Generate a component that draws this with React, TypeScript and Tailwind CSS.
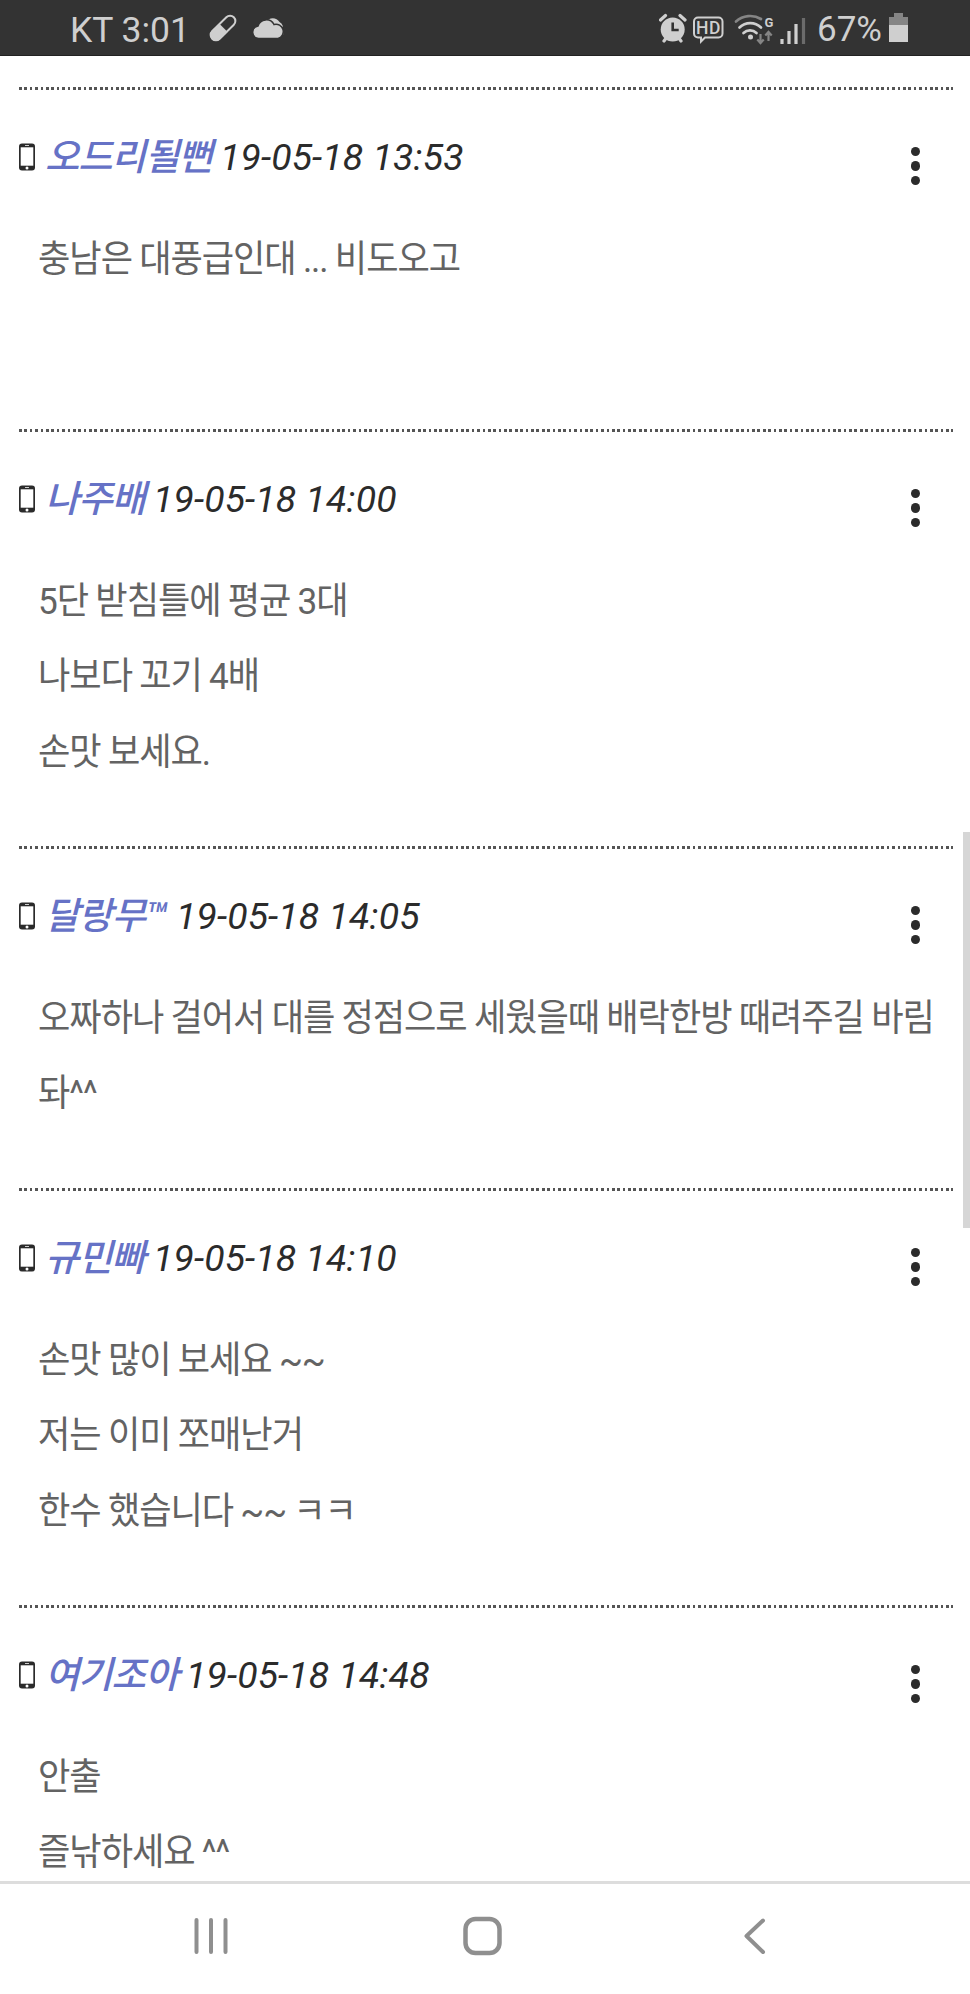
type CommentData = {
	nick: string;
	nickClass: string;
	date: string;
	lines: string[];
	size: string;
}

const comments: CommentData[] = [
	{nick: '오드리될뻔', nickClass: 'w-[176px]', date: '19-05-18 13:53', lines: ['충남은 대풍급인대 ... 비도오고'], size: 'h-[342px]'},
	{nick: '나주배', nickClass: 'w-[109px]', date: '19-05-18 14:00', lines: ['5단 받침틀에 평균 3대', '나보다 꼬기 4배', '손맛 보세요.'], size: 'h-[417px]'},
	{nick: '달랑무™', nickClass: 'w-[132px]', date: '19-05-18 14:05', lines: ['오짜하나 걸어서 대를 정점으로 세웠을때 배락한방 때려주길 바림', '돠^^'], size: 'h-[342px]'},
	{nick: '규민빠', nickClass: 'w-[109px]', date: '19-05-18 14:10', lines: ['손맛 많이 보세요 ~~', '저는 이미 쪼매난거', '한수 했습니다 ~~ ㅋㅋ'], size: 'h-[417px]'},
	{nick: '여기조아', nickClass: 'w-[142px]', date: '19-05-18 14:48', lines: ['안출', '즐낚하세요 ^^'], size: 'h-[342px]'},
]

const LeftIcons = () => (
	<svg className="ml-[19px]" width="80" height="36" viewBox="0 0 80 36" fill="none">
		<g transform="translate(1 0) rotate(45 15 18)">
			<rect x="9.7" y="2.700" width="10.6" height="30.600" rx="5.300" stroke="#cfcfcf" strokeWidth="2" />
			<path d="M9 17.5h12V27.700a6 6 0 0 1-12 0z" fill="#cfcfcf" />
		</g>
		<path d="M59 12a8 8 0 0 1 13.500 0 6.500 6.500 0 0 1 3 8.500l1 4-5-3z" fill="#cfcfcf" />
		<path d="M51.500 28.500a6.300 6.300 0 0 1-.5-12.500 8.700 8.700 0 0 1 16-1.500 7.200 7.200 0 0 1 4 14z" fill="#cfcfcf" stroke="#333" strokeWidth="1.500" />
	</svg>
)

const RightIcons = () => (
	<svg width="150" height="36" viewBox="0 0 150 36" fill="none">
		{/* alarm */}
		<g stroke="#cfcfcf" strokeWidth="3.200" strokeLinecap="round">
			<path d="M1.500 10l5-4.500M26 10l-5-4.500M5 31l3-4M22 31l-3-4" />
		</g>
		<circle cx="13.700" cy="19.500" r="12" fill="#cfcfcf" />
		<path d="M13.700 12.500v7.500h6" stroke="#333" strokeWidth="2.600" />
		{/* HD voice */}
		<path d="M39 7.500h20.500a4 4 0 0 1 4 4v12a4 4 0 0 1-4 4H46l-4 4v-4h-3a4 4 0 0 1-4-4v-12a4 4 0 0 1 4-4z" stroke="#cfcfcf" strokeWidth="2" />
		<text x="37" y="23.800" fill="#cfcfcf" fontFamily="Roboto, sans-serif" fontSize="17.500" fontWeight="500" textLength="24.500">HD</text>
		{/* wifi */}
		<g strokeWidth="2.700" strokeLinecap="round">
			<path d="M77 11.500a21 21 0 0 1 25-2.500" stroke="#858585" />
			<path d="M80.500 17.500a15.500 15.500 0 0 1 21.500 0M84.500 23a9.500 9.500 0 0 1 13 0" stroke="#cfcfcf" />
		</g>
		<circle cx="91.500" cy="27" r="2.500" fill="#cfcfcf" />
		<text x="105.500" y="17" fill="#cfcfcf" fontFamily="Roboto, sans-serif" fontSize="13" fontWeight="700">G</text>
		<path d="M101.500 24v9M98.300 29.500l3.200 3.500 3.200-3.500M109.500 31v-9M106.300 25.500l3.200-3.500 3.200 3.500" stroke="#858585" strokeWidth="2.200" />
		{/* signal */}
		<g strokeWidth="3.200" stroke="#cfcfcf">
			<path d="M123 34v-5M130 34V21M137 34V14" />
			<path d="M144.500 34V8" stroke="#6b6b6b" />
		</g>
	</svg>
)

const StatusBar = () => (
	<div className="flex h-14 w-full items-center border-b border-[#222] bg-[#333] pl-[70px] text-[#cfcfcf]">
		<span className="mt-[5px] w-[118px] whitespace-nowrap text-[35.500px] leading-[36px]">KT 3:01</span>
		<LeftIcons />
		<div className="ml-auto flex items-center pr-[62px]">
			<RightIcons />
			<span className="ml-[8px] mt-[5px] text-[35px] leading-[36px]">67%</span>
			<svg className="ml-[7px] mt-px" width="19" height="30" viewBox="0 0 19 30">
				<path d="M5 0h9v4h5v9H0V4h5z" fill="#858585" />
				<path d="M0 12h19v17H0z" fill="#cfcfcf" />
			</svg>
		</div>
	</div>
)

const PhoneIcon = () => (
	<svg className="shrink-0" width="16" height="28" viewBox="0 0 16 28">
		<rect x="0" y="0.500" width="16" height="27" rx="3" fill="#2b2b2b" />
		<rect x="1.700" y="4.300" width="12.600" height="18.400" fill="#fff" />
		<path d="M6 2.500h4" stroke="#ccc" />
		<circle cx="8" cy="25" r="1.500" fill="#fff" />
	</svg>
)

const Comment = ({comment}: {comment: CommentData}) => (
	<article className={`flex flex-col ${comment.size}`}>
		<div className="ml-[19px] mr-[17px] h-[3px] shrink-0 bg-[repeating-linear-gradient(90deg,#555_0_2.700px,transparent_2.700px_5.390px)]"></div>
		<header className="flex h-[92px] shrink-0 items-start pl-[19px] pr-[50px] pt-[44px]">
			<div className="flex h-[46px] items-center">
				<PhoneIcon />
				<strong className={`ml-[10px] whitespace-nowrap text-[37.400px] leading-[46px] font-medium italic tracking-[-1.100px] text-[#6672c6] ${comment.nickClass}`}>{comment.nick}</strong>
				<time className="-ml-px whitespace-nowrap text-[37.400px] leading-[46px] italic tracking-[0.120px] text-[#2b2b2b]">{comment.date}</time>
			</div>
			<button className="ml-auto mt-[13px] flex flex-col gap-[5px]">
				<i className="size-[9.300px] rounded-full bg-[#2b2b2b]"></i>
				<i className="size-[9.300px] rounded-full bg-[#2b2b2b]"></i>
				<i className="size-[9.300px] rounded-full bg-[#2b2b2b]"></i>
			</button>
		</header>
		<div className="mt-[40px] origin-left scale-x-[0.940] pl-[40.500px] text-[37.400px] leading-[75.300px] tracking-[-1.120px] [word-spacing:-0.400px] text-[#636363]">
			{comment.lines.map((line) => (
				<p key={line} className="whitespace-nowrap">{line}</p>
			))}
		</div>
	</article>
)

const NavBar = () => (
	<nav className="flex h-[113px] w-full shrink-0 items-center border-t-[3px] border-[#ddd] bg-white pb-[6px]">
		<svg className="ml-[190px]" width="40" height="40" viewBox="0 0 40 40" stroke="#8f8f8f" strokeWidth="4" strokeLinecap="round">
			<path d="M6.500 4v32M21 4v32M35.500 4v32" />
		</svg>
		<svg className="ml-[232px]" width="40" height="40" viewBox="0 0 40 40" fill="none" stroke="#8f8f8f" strokeWidth="4.500">
			<rect x="3.500" y="3" width="34" height="34" rx="10" />
		</svg>
		<svg className="ml-[237px]" width="30" height="40" viewBox="0 0 30 40" fill="none" stroke="#8f8f8f" strokeWidth="4" strokeLinecap="round" strokeLinejoin="round">
			<path d="M24 4.500L7.500 20 24 36" />
		</svg>
	</nav>
)

const App = () => {
	return (
		<div className="relative flex h-[1994px] w-[970px] flex-col overflow-hidden bg-white font-['Roboto','Noto_Sans_CJK_KR',sans-serif]">
			<StatusBar />
			<main className="h-[1825px] shrink-0 overflow-hidden pt-[31px]">
				{comments.map((comment) => (
					<Comment key={comment.date} comment={comment} />
				))}
			</main>
			<NavBar />
			<div className="absolute right-0 top-[832px] h-[396px] w-[7px] bg-[#d6d6d6]"></div>
		</div>
	)
}

export default App
